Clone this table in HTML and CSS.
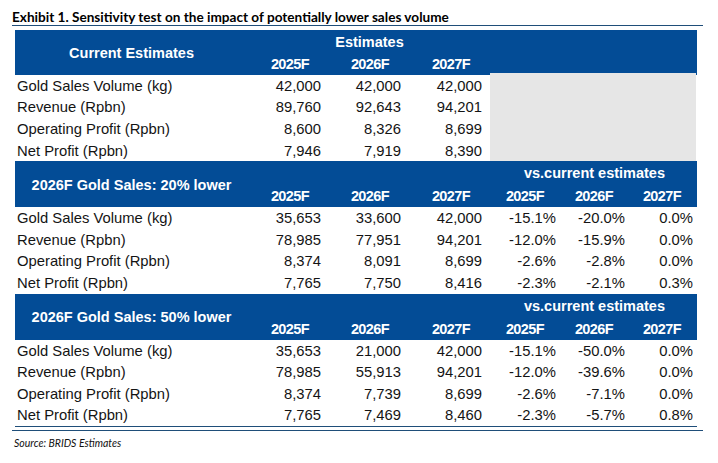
FILE: index.html
```html
<!DOCTYPE html>
<html>
<head>
<meta charset="utf-8">
<link rel="stylesheet" href="styles.css">
</head>
<body>
<div class="exhibit">
  <div class="title">Exhibit 1. Sensitivity test on the impact of potentially lower sales volume</div>
  <div class="table">
    <div class="thead thead-first">
      <div class="h-label">Current Estimates</div>
      <div class="h-group h-group-est">Estimates</div>
      <div class="h-year c2">2025F</div>
      <div class="h-year c3">2026F</div>
      <div class="h-year c4">2027F</div>
    </div>
    <div class="tbody">
      <div class="gray"></div>
      <div class="lbl">Gold Sales Volume (kg)</div><div class="num c2">42,000</div><div class="num c3">42,000</div><div class="num c4">42,000</div>
      <div class="lbl">Revenue (Rpbn)</div><div class="num c2">89,760</div><div class="num c3">92,643</div><div class="num c4">94,201</div>
      <div class="lbl">Operating Profit (Rpbn)</div><div class="num c2">8,600</div><div class="num c3">8,326</div><div class="num c4">8,699</div>
      <div class="lbl">Net Profit (Rpbn)</div><div class="num c2">7,946</div><div class="num c3">7,919</div><div class="num c4">8,390</div>
    </div>

    <div class="thead">
      <div class="h-label">2026F Gold Sales: 20% lower</div>
      <div class="h-group h-group-vs">vs.current estimates</div>
      <div class="h-year c2">2025F</div>
      <div class="h-year c3">2026F</div>
      <div class="h-year c4">2027F</div>
      <div class="h-year c5">2025F</div>
      <div class="h-year c6">2026F</div>
      <div class="h-year c7">2027F</div>
    </div>
    <div class="tbody">
      <div class="lbl">Gold Sales Volume (kg)</div><div class="num">35,653</div><div class="num">33,600</div><div class="num">42,000</div><div class="num">-15.1%</div><div class="num">-20.0%</div><div class="num">0.0%</div>
      <div class="lbl">Revenue (Rpbn)</div><div class="num">78,985</div><div class="num">77,951</div><div class="num">94,201</div><div class="num">-12.0%</div><div class="num">-15.9%</div><div class="num">0.0%</div>
      <div class="lbl">Operating Profit (Rpbn)</div><div class="num">8,374</div><div class="num">8,091</div><div class="num">8,699</div><div class="num">-2.6%</div><div class="num">-2.8%</div><div class="num">0.0%</div>
      <div class="lbl">Net Profit (Rpbn)</div><div class="num">7,765</div><div class="num">7,750</div><div class="num">8,416</div><div class="num">-2.3%</div><div class="num">-2.1%</div><div class="num">0.3%</div>
    </div>

    <div class="thead">
      <div class="h-label">2026F Gold Sales: 50% lower</div>
      <div class="h-group h-group-vs">vs.current estimates</div>
      <div class="h-year c2">2025F</div>
      <div class="h-year c3">2026F</div>
      <div class="h-year c4">2027F</div>
      <div class="h-year c5">2025F</div>
      <div class="h-year c6">2026F</div>
      <div class="h-year c7">2027F</div>
    </div>
    <div class="tbody tbody-last">
      <div class="lbl">Gold Sales Volume (kg)</div><div class="num">35,653</div><div class="num">21,000</div><div class="num">42,000</div><div class="num">-15.1%</div><div class="num">-50.0%</div><div class="num">0.0%</div>
      <div class="lbl">Revenue (Rpbn)</div><div class="num">78,985</div><div class="num">55,913</div><div class="num">94,201</div><div class="num">-12.0%</div><div class="num">-39.6%</div><div class="num">0.0%</div>
      <div class="lbl">Operating Profit (Rpbn)</div><div class="num">8,374</div><div class="num">7,739</div><div class="num">8,699</div><div class="num">-2.6%</div><div class="num">-7.1%</div><div class="num">0.0%</div>
      <div class="lbl">Net Profit (Rpbn)</div><div class="num">7,765</div><div class="num">7,469</div><div class="num">8,460</div><div class="num">-2.3%</div><div class="num">-5.7%</div><div class="num">0.8%</div>
    </div>
  </div>
  <div class="rule"></div>
  <div class="source">Source: BRIDS Estimates</div>
</div>
</body>
</html>
```
FILE: styles.css
```css
html, body {
  margin: 0;
  padding: 0;
  background: #ffffff;
}

.exhibit {
  width: 691px;
  margin-left: 12px;
  padding-top: 9px;
}

.title {
  font-family: "Lato", "Liberation Sans", sans-serif;
  font-weight: 700;
  font-size: 13.6px;
  line-height: 16px;
  color: #000;
  border-bottom: 1px solid #1f4e79;
  margin-bottom: 4px;
}

.table {
  margin: 0 6px 0 3px;
  width: 682px;
}

.thead,
.tbody {
  display: grid;
  grid-template-columns: 226px 80px 80px 81px 74px 69px 68px;
  padding-right: 4px;
}

.thead {
  background: #034c96;
  color: #ffffff;
  grid-template-rows: 24px 22px;
  height: 46px;
}

.thead-first {
  grid-template-rows: 23px 22px;
  height: 45px;
}

.h-label {
  grid-column: 1;
  grid-row: 1 / 3;
  align-self: center;
  text-align: center;
  padding-left: 7px;
  padding-top: 1px;
  font-family: "Liberation Sans", Arial, sans-serif;
  font-weight: 700;
  font-size: 14.5px;
}

.thead-first .h-label {
  padding-top: 0;
}

.h-group {
  grid-row: 1;
  align-self: center;
  font-family: "Liberation Sans", Arial, sans-serif;
  font-weight: 700;
  font-size: 14.5px;
  white-space: nowrap;
}

.h-group-est {
  grid-column: 2 / 5;
  text-align: center;
  padding-left: 16px;
}

.h-group-vs {
  grid-column: 5 / 8;
  text-align: right;
  padding-right: 28px;
}

.h-year {
  grid-row: 2;
  align-self: center;
  text-align: right;
  padding-right: 12px;
  font-family: "Liberation Sans", Arial, sans-serif;
  font-weight: 700;
  font-size: 14.5px;
  letter-spacing: -0.6px;
  line-height: 18px;
}

.c2 { grid-column: 2; }
.c3 { grid-column: 3; }
.c4 { grid-column: 4; }
.c5 { grid-column: 5; }
.c6 { grid-column: 6; }
.c7 { grid-column: 7; }

.tbody {
  grid-auto-rows: 21.6px;
  align-items: center;
  color: #141414;
  font-family: "Liberation Sans", Arial, sans-serif;
  font-size: 14.8px;
}

.gray {
  grid-column: 5 / 8;
  grid-row: 1 / 5;
  align-self: stretch;
  background: #e6e6e6;
  margin-left: 8px;
  margin-right: -3px;
  margin-top: -2px;
}

.lbl {
  grid-column: 1;
  padding-left: 2px;
  white-space: nowrap;
}

.num {
  text-align: right;
  white-space: nowrap;
}

.tbody-last {
  border-bottom: 1px solid #1f4e79;
}

.rule {
  margin-top: 3px;
  border-top: 1.5px solid #1f4e79;
}

.source {
  margin-top: 6px;
  padding-left: 2px;
  font-family: "Lato", "Liberation Sans", sans-serif;
  font-style: italic;
  font-size: 10.5px;
  line-height: 12px;
  color: #111;
}
```
